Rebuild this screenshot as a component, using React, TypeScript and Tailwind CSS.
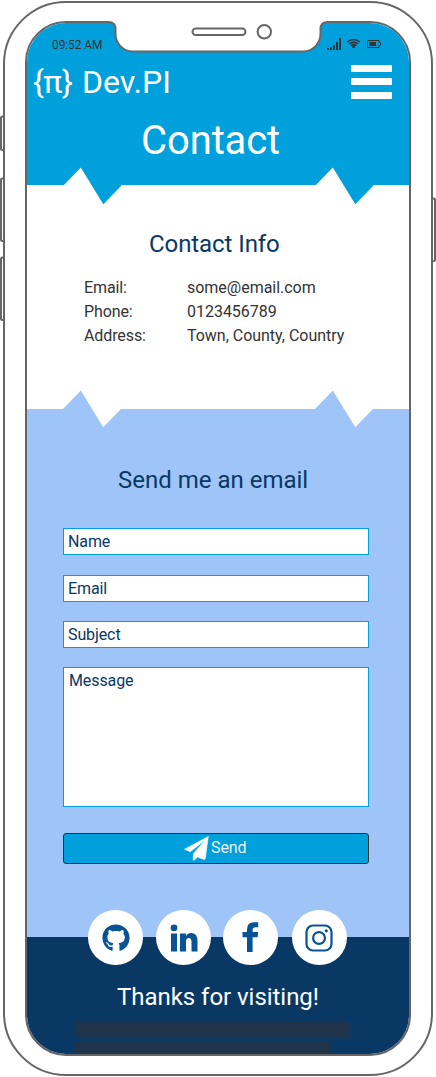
import type { ReactNode } from "react";
import { FaGithub } from "react-icons/fa";

function Zigzag({ className, up, down }: { className: string; up: string; down: string }) {
  return (
    <svg className={`absolute z-10 ${className}`} width="58" height="38" viewBox="0 0 58 38">
      <path d="M0 19 L17.8 0.5 L29.1 19 Z" className={up} />
      <path d="M28.500 18 L40.3 37.3 L58 19 V18 Z" className={down} />
    </svg>
  );
}

function StatusIcons() {
  return (
    <svg width="56" height="14" viewBox="327 37 56 14" className="text-[#333]" fill="none">
      <g fill="currentColor">
        <rect x="327" y="48" width="2" height="2" />
        <rect x="330" y="47" width="2" height="3" />
        <rect x="333" y="45" width="2" height="5" />
        <rect x="336" y="42" width="2" height="8" />
        <rect x="339" y="38" width="2" height="12" />
        <circle cx="353.5" cy="46.8" r="1.4" />
        <rect x="369" y="42" width="7" height="4" />
      </g>
      <g stroke="currentColor" strokeWidth="1.6">
        <path d="M347.3 42.2 Q353.5 36.8 359.7 42.2" />
        <path d="M349.2 44 Q353.5 40.2 357.8 44" />
        <path d="M351 45.8 Q353.5 43.4 356 45.8" />
      </g>
      <path d="M367.5 40.5 H379 V42.5 H380.5 V45.5 H379 V47.5 H367.5 Z" stroke="currentColor" strokeWidth="1" />
    </svg>
  );
}

function Field({ label, className }: { label: string; className: string }) {
  return (
    <div className={`w-[306px] border border-[#00a0dc] bg-white pt-px text-[16px] leading-[24px] tracking-[-0.1px] text-[#083863] ${className}`}>
      {label}
    </div>
  );
}

function Social({ children, className }: { children: ReactNode; className: string }) {
  return (
    <a className={`flex size-[55px] items-center justify-center rounded-full bg-white text-[#085394] ${className}`}>
      {children}
    </a>
  );
}

function DeviceChrome() {
  return (
    <svg className="pointer-events-none absolute inset-0 z-20" width="436" height="1077" viewBox="0 0 436 1077" fill="none" stroke="#666" strokeWidth="2">
      <path d="M108 20 V22 Q115.500 22 115.500 29 V34 A17.500 17.500 0 0 0 133 51.500 H303 A17.500 17.500 0 0 0 320.500 34 V29 Q320.500 22 328 22 V20 Z" fill="#fff" stroke="none" />
      <path d="M106 22 H108 Q115.500 22 115.500 29 V34 A17.500 17.500 0 0 0 133 51.500 H303 A17.500 17.500 0 0 0 320.500 34 V29 Q320.500 22 328 22 H330" />
      <rect x="192.500" y="28.500" width="53" height="6.500" rx="3.250" />
      <circle cx="264.300" cy="31.700" r="6.700" />
      <path d="M4 116.500 H2.500 Q1 116.500 1 118 V148.500 Q1 150 2.500 150 H4" />
      <path d="M4 178.500 H2.500 Q1 178.500 1 180 V239.500 Q1 241 2.500 241 H4" />
      <path d="M4 257.500 H2.500 Q1 257.500 1 259 V318.500 Q1 320 2.500 320 H4" />
      <path d="M432 198.500 H433.500 Q435 198.500 435 200 V259.500 Q435 261 433.500 261 H432" />
    </svg>
  );
}

const info = [
  ["Email:", "some@email.com"],
  ["Phone:", "0123456789"],
  ["Address:", "Town, County, Country"],
];

export default function App() {
  return (
    <div className="relative h-[1077px] w-[436px] overflow-hidden bg-white pl-[3px] pt-px font-['Roboto',sans-serif]">
      <div className="h-[1075px] w-[430px] rounded-[63px] border-2 border-[#666] pl-[20px] pt-[18px]">
        <div className="flex h-[1035px] w-[386px] flex-col overflow-hidden rounded-[41px] border-2 border-[#666] bg-white">
          <header className="relative h-[162px] shrink-0 bg-[#00a0dc] pt-[14px] text-white">
            <div className="flex h-4 justify-between pl-[25px] pr-[26px]">
              <span className="text-[12px] leading-4 tracking-[-0.1px] text-[#333]">09:52 AM</span>
              <StatusIcons />
            </div>
            <div className="mt-[9px] flex h-10 items-center justify-between pl-[6px] pr-[17px]">
              <div className="flex text-[32px] leading-10">
                <span className="w-[49px] tracking-[-0.5px]">{"{π}"}</span>
                <span>Dev.PI</span>
              </div>
              <div className="flex h-[34px] w-[41px] flex-col">
                <span className="h-[7px] rounded-[1px] bg-white" />
                <span className="mt-[6px] h-[7px] rounded-[1px] bg-white" />
                <span className="mt-[7px] h-[7px] rounded-[1px] bg-white" />
              </div>
            </div>
            <h1 className="mt-[15px] pl-[114px] text-[40px] leading-[48px] tracking-[-0.1px]">Contact</h1>
            <Zigzag className="left-[35.5px] top-[144px]" up="fill-white" down="fill-[#00a0dc]" />
            <Zigzag className="left-[287.5px] top-[144px]" up="fill-white" down="fill-[#00a0dc]" />
          </header>

          <section className="relative h-[224px] shrink-0 bg-white pt-[43px]">
            <h2 className="pl-[122px] text-[24px] leading-8 tracking-[-0.08px] text-[#083863]">Contact Info</h2>
            <dl className="mt-4 grid grid-cols-[103px_1fr] pl-[57px] text-[16px] leading-6 text-[#333]">
              {info.map(([k, v]) => (
                <div key={k} className="contents">
                  <dt className="tracking-[-0.1px]">{k}</dt>
                  <dd className="whitespace-nowrap tracking-[-0.02px]">{v}</dd>
                </div>
              ))}
            </dl>
            <Zigzag className="left-[36px] top-[205px]" up="fill-[#9fc5f8]" down="fill-white" />
            <Zigzag className="left-[288px] top-[205px]" up="fill-[#9fc5f8]" down="fill-white" />
          </section>

          <section className="flex h-[528px] shrink-0 flex-col bg-[#9fc5f8] pl-[36px] pt-[55px]">
            <h2 className="pl-[55px] text-[24px] leading-8 text-[#083863]">Send me an email</h2>
            <Field label="Name" className="mt-8 h-[27px] pl-1" />
            <Field label="Email" className="mt-5 h-[27px] pl-1" />
            <Field label="Subject" className="mt-[19px] h-[27px] pl-1" />
            <Field label="Message" className="mt-[19px] h-[140px] pl-[5px]" />
            <button className="mt-[26px] flex h-[31px] w-[306px] items-center rounded-[3px] border border-[#333] bg-[#00a0dc] pl-[120px] text-[16px] text-[#eee]">
              <svg width="25" height="25" viewBox="0 0 25 25" fill="#fff" stroke="#fff" strokeWidth="0.6" strokeLinejoin="round">
                <path d="M24.300 0.500 L0.500 13.300 L6.300 15.700 L21.500 3.800 L9.500 17.500 L9.100 23.500 Q9.300 24.600 10.300 24 L13.500 21 L19.800 23.400 Q21 23.600 21.300 22.300 Z" />
              </svg>
              <span className="-mt-px ml-[2px] leading-6 tracking-[-0.1px]">Send</span>
            </button>
          </section>

          <footer className="flex-1 bg-[#083863]">
            <div className="-mt-[27px] flex pl-[61.4px]">
              <Social className="mr-[13px]"><FaGithub className="size-[28px]" /></Social>
              <Social className="mr-3">
                <svg width="28" height="28" viewBox="0 0 28 28" fill="currentColor">
                  <circle cx="4" cy="3.800" r="3.400" />
                  <rect x="1" y="9.500" width="6" height="18" />
                  <path d="M10 9.500 H15.900 V12 Q17.700 9 21.300 9 Q27.500 9 27.500 17 V27.500 H21.500 V18 Q21.500 14 18.900 14 Q16 14 16 18 V27.500 H10 Z" />
                </svg>
              </Social>
              <Social className="mr-[14px]">
                <svg width="17" height="30" viewBox="0 0 17 30" className="-mt-px" fill="currentColor"><path d="M5 30 V15.200 H0.500 V10 H5 V7.500 Q5 0.300 12 0.300 H16.200 V5.300 H13.500 Q10.600 5.300 10.600 8 V10 H16.200 L15.600 15.200 H10.600 V30 Z" /></svg>
              </Social>
              <Social className="">
                <svg width="28" height="28" viewBox="0 0 28 28" className="-ml-px" fill="none" stroke="currentColor" strokeWidth="2.200"><rect x="1.500" y="1.500" width="25" height="25" rx="6.500" /><circle cx="14" cy="14" r="5.900" /><circle cx="21.300" cy="6.800" r="1.600" fill="currentColor" stroke="none" /></svg>
              </Social>
            </div>
            <p className="mt-4 pl-[90px] text-[24px] leading-8 text-white tracking-[-0.04px]">Thanks for visiting!</p>
            <div className="ml-12 mt-[9px] h-4 w-[275px] bg-[#1f344b]" />
            <div className="ml-12 mt-[4px] h-4 w-[256px] bg-[#1f344b]" />
          </footer>
        </div>
      </div>
      <DeviceChrome />
    </div>
  );
}
